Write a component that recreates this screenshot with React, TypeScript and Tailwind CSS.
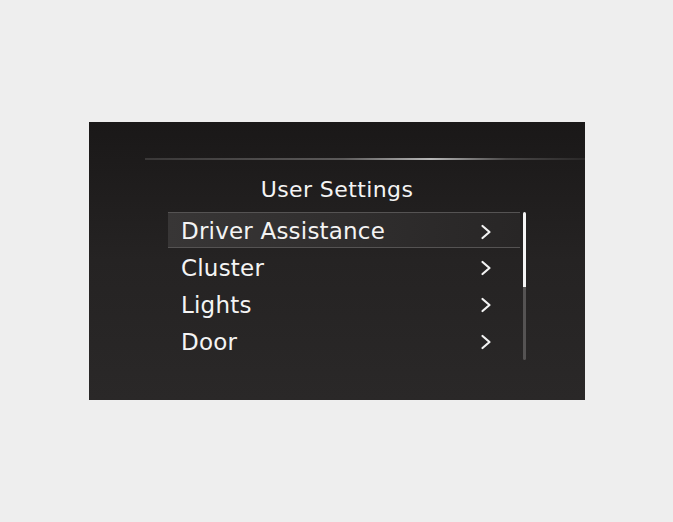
import React from 'react';

const items = ['Driver Assistance', 'Cluster', 'Lights', 'Door'];

const Chevron: React.FC = () => (
  <svg width="12" height="16" viewBox="0 0 12 16" fill="none">
    <path d="M2.5 2 L9.5 8 L2.5 14" stroke="#f2f2f2" strokeWidth="2.2" strokeLinecap="round" strokeLinejoin="round" />
  </svg>
);

const App: React.FC = () => {
  return (
    <div className="w-[673px] h-[522px] bg-[#eeeeee] pt-[122px] pl-[89px]" style={{ fontFamily: '"DejaVu Sans", "Liberation Sans", sans-serif' }}>
      <div className="w-[496px] h-[278px] bg-gradient-to-b from-[#1a1818] via-[#252323] to-[#2a2828] flex flex-col">
        <div className="mt-[36px] ml-[56px] h-[2px] bg-[linear-gradient(to_right,#3a3838,#5c5a5a_45%,#b8b8b8_65%,#4a4848_82%,#2a2828)]" />
        <div className="mt-[16px] text-center text-[22px] leading-[28px] text-[#f4f4f4] tracking-[0.4px]">User Settings</div>
        <div className="mt-[8px] ml-[79px] flex">
          <div className="w-[352px] flex flex-col">
            {items.map((label, i) => (
              <div
                key={label}
                className={
                  i === 0
                    ? 'h-[36px] pt-[3px] flex items-center justify-between pl-[13px] pr-[28px] bg-gradient-to-r from-[#383636] via-[#302e2e] to-[#282626] border-y border-[#555353]'
                    : 'h-[37px] pt-[3px] flex items-center justify-between pl-[13px] pr-[28px]'
                }
              >
                <span className="text-[23px] text-[#f4f4f4] tracking-[0.2px]">{label}</span>
                <Chevron />
              </div>
            ))}
          </div>
          <div className="ml-[3px] w-[3px] h-[148px] flex flex-col rounded-full overflow-hidden">
            <div className="h-[75px] bg-[#f4f4f4]" />
            <div className="flex-1 bg-[#555353]" />
          </div>
        </div>
      </div>
    </div>
  );
};

export default App;
